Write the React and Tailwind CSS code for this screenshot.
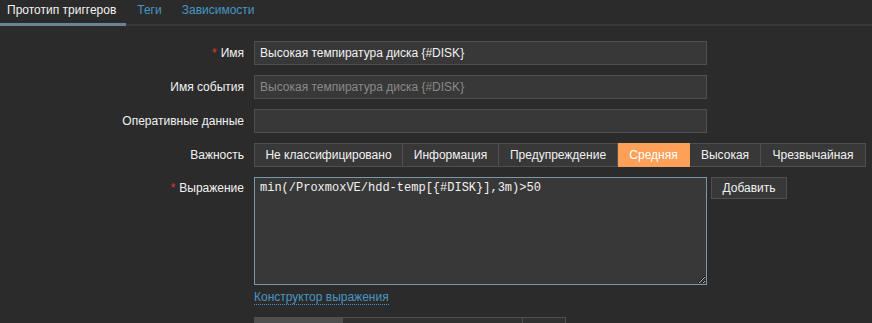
import React from "react";

const sev = [
  { t: "Не классифицировано", w: "w-[149px]" },
  { t: "Информация", w: "w-[96px]" },
  { t: "Предупреждение", w: "w-[119px]" },
  { t: "Средняя", w: "w-[72px]", active: true },
  { t: "Высокая", w: "w-[71px]" },
  { t: "Чрезвычайная", w: "w-[105px]" },
];

function Label({ children, req, top }) {
  return (
    <div
      className={`flex justify-end text-right text-[12px] text-[#f2f2f2] ${
        top ? "items-start leading-[22px]" : "items-center"
      }`}
    >
      {req && <span className="mr-[4px] text-[#e33734]">*</span>}
      <span>{children}</span>
    </div>
  );
}

export default function App() {
  return (
    <div
      className="h-[323px] w-[872px] overflow-hidden bg-[#2b2b2b] text-[12px] text-[#f2f2f2]"
      style={{ fontFamily: '"Liberation Sans", Arial, sans-serif' }}
    >
      {/* tabs */}
      <div className="flex h-[26px] border-b-2 border-[#383838]">
        <div className="-mb-[2px] flex h-[26px] items-start border-b-[3px] border-[#6a8591] pl-[7px] pr-[10px] pt-[3px] leading-[14px] text-[#f2f2f2]">
          Прототип триггеров
        </div>
        <div className="flex h-[24px] items-start pl-[11px] pr-[10px] pt-[3px] leading-[14px] text-[#4796c4]">
          Теги
        </div>
        <div className="flex h-[24px] items-start px-[10px] pt-[3px] leading-[14px] text-[#4796c4]">
          Зависимости
        </div>
      </div>

      <div className="mt-[15px] grid grid-cols-[244px_auto] gap-x-[10px] gap-y-[10px]">
        <Label req>Имя</Label>
        <div className="flex h-[24px] w-[453px] items-center border border-[#4f4f4f] bg-[#383838] px-[5px] text-[#f2f2f2]">
          Высокая темпиратура диска {"{#DISK}"}
        </div>

        <Label>Имя события</Label>
        <div className="flex h-[24px] w-[453px] items-center border border-[#4f4f4f] bg-[#383838] px-[5px] text-[#8a8a8a]">
          Высокая темпиратура диска {"{#DISK}"}
        </div>

        <Label>Оперативные данные</Label>
        <div className="h-[24px] w-[453px] border border-[#4f4f4f] bg-[#383838]" />

        <Label>Важность</Label>
        <div className="flex h-[24px]">
          {sev.map((s, i) => (
            <div
              key={s.t}
              className={`flex h-[24px] items-center justify-center border-y border-r ${
                i === 0 ? "border-l" : ""
              } ${s.w} ${
                s.active
                  ? "border-[#ffa059] bg-[#ffa059] text-white"
                  : "border-[#4f4f4f] bg-[#383838] text-[#f2f2f2]"
              }`}
            >
              {s.t}
            </div>
          ))}
        </div>

        <Label req top>
          Выражение
        </Label>
        <div className="flex flex-col items-start">
          <div className="flex items-start gap-[4px]">
            <textarea
              readOnly
              value="min(/ProxmoxVE/hdd-temp[{#DISK}],3m)>50"
              className="block h-[108px] w-[453px] resize border border-[#7b97a5] bg-[#383838] px-[5px] pt-[3px] text-[12px] leading-[14px] text-[#f2f2f2] outline-none"
              style={{ fontFamily: '"Liberation Mono", "Courier New", monospace' }}
            />
            <div className="flex h-[22px] w-[76px] items-center justify-center border border-[#4f4f4f] bg-[#383838] text-[#f2f2f2]">
              Добавить
            </div>
          </div>
          <div className="mt-[6px] border-b border-dotted border-[#4796c4] leading-[13px] text-[#4796c4]">
            Конструктор выражения
          </div>
          <div className="mt-[12px] flex h-[24px] border border-[#4f4f4f]">
            <div className="w-[87px] bg-[#4f4f4f]" />
            <div className="w-[180px] border-l border-[#4f4f4f] bg-[#303030]" />
            <div className="w-[43px] border-l border-[#4f4f4f] bg-[#303030]" />
          </div>
        </div>
      </div>
    </div>
  );
}
